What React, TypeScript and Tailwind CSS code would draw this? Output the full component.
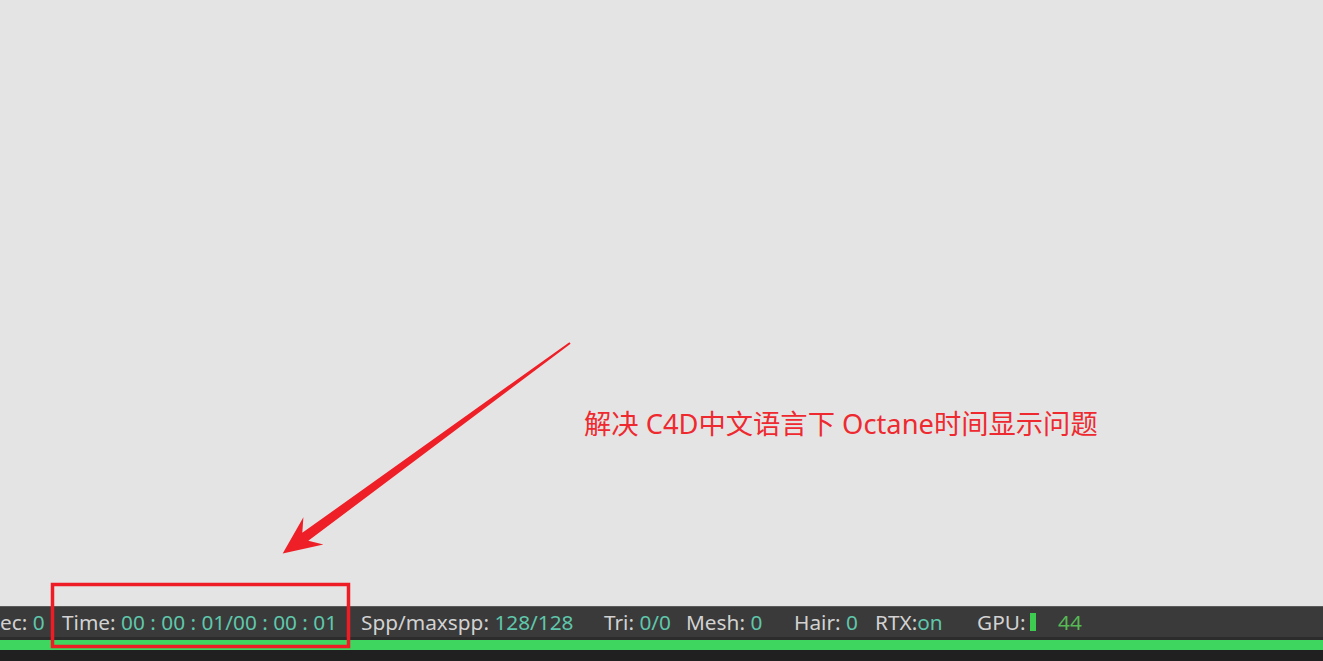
import React from 'react';

const label = 'text-[#d2d2d2]';
const value = 'text-[#5fc7ab]';

const StatusItem = ({ name, val, width }: { name: string; val: string; width: string }) => (
  <span className={`${width} shrink-0 whitespace-nowrap`}>
    <span className={label}>{name}</span>
    <span className={value}>{val}</span>
  </span>
);

const Overlay = () => (
  <svg className="absolute inset-0 pointer-events-none" width="1323" height="661" viewBox="0 0 1323 661">
    {/* arrow pointing at the time field */}
    <polygon
      fill="#ee1f27"
      points="569.4,342.2 302.3,532.8 303.4,517.2 282.7,553.4 323.4,544.6 308.3,540.8 570.6,343.8"
    />
    <rect x="52.5" y="584.5" width="296" height="62" fill="none" stroke="#ee1c25" strokeWidth="3.5" />
  </svg>
);

export default function App() {
  return (
    <div className="relative w-[1323px] h-[661px] overflow-hidden flex flex-col bg-[#e4e4e4]">
      <div className="flex-1 relative">
        <p
          className="absolute left-[584px] top-[404px] text-[27.3px] text-[#ee2a30] whitespace-nowrap"
          style={{ fontFamily: '"Noto Sans", "Noto Sans CJK SC", sans-serif' }}
        >
          解决 C4D中文语言下 Octane时间显示问题
        </p>
      </div>

      <div className="h-px bg-[#5a5a5a]" />
      <div
        className="h-[30px] bg-[#3a3a3a] flex items-center text-[20.8px] leading-none"
        style={{ fontFamily: '"Noto Sans", sans-serif' }}
      >
        <StatusItem name="ec: " val="0" width="w-[62px]" />
        <StatusItem name="Time: " val="00 : 00 : 01/00 : 00 : 01" width="w-[299px]" />
        <StatusItem name="Spp/maxspp: " val="128/128" width="w-[243px]" />
        <StatusItem name="Tri: " val="0/0" width="w-[82px]" />
        <StatusItem name="Mesh: " val="0" width="w-[108px]" />
        <StatusItem name="Hair: " val="0" width="w-[81px]" />
        <StatusItem name="RTX:" val="on" width="w-[102px]" />
        <span className="w-[53px] shrink-0 text-[#d2d2d2]">GPU:</span>
        <span className="w-[6px] h-[18px] bg-[#3dcc4f] shrink-0" />
        <span className="ml-[22px] text-[#56b955]">44</span>
      </div>
      <div className="h-[3px] bg-[#2c2c2c]" />
      <div className="h-[10px] bg-[#3fd65f]" />
      <div className="h-[11px] bg-[#202020]" />

      <Overlay />
    </div>
  );
}
